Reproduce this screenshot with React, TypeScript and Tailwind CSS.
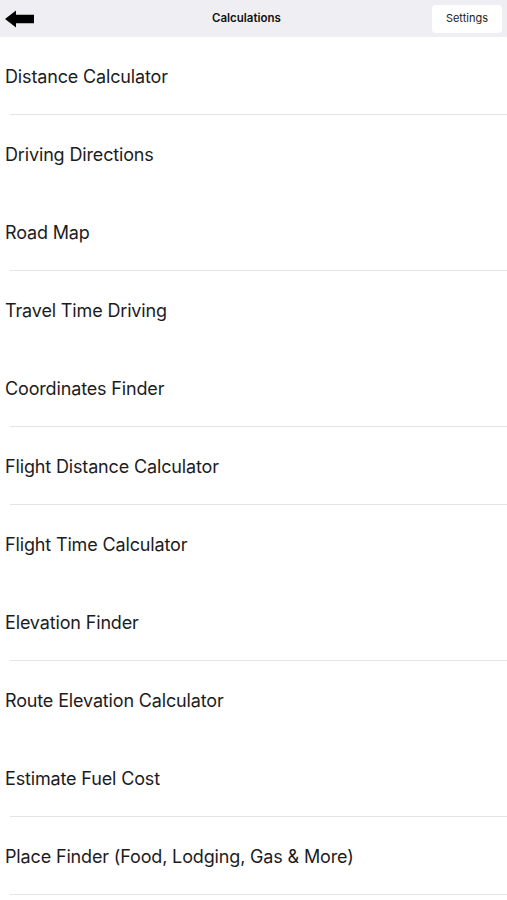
import React from 'react';

const items: { label: string; divider: boolean }[] = [
  { label: 'Distance Calculator', divider: true },
  { label: 'Driving Directions', divider: false },
  { label: 'Road Map', divider: true },
  { label: 'Travel Time Driving', divider: false },
  { label: 'Coordinates Finder', divider: true },
  { label: 'Flight Distance Calculator', divider: true },
  { label: 'Flight Time Calculator', divider: false },
  { label: 'Elevation Finder', divider: true },
  { label: 'Route Elevation Calculator', divider: false },
  { label: 'Estimate Fuel Cost', divider: true },
  { label: 'Place Finder (Food, Lodging, Gas & More)', divider: true },
];

const App: React.FC = () => {
  return (
    <div className="w-[507px] h-[900px] overflow-hidden bg-white" style={{ fontFamily: 'Inter, "Noto Sans", sans-serif' }}>
      {/* header */}
      <div className="h-[37px] bg-[#efeff3] flex items-center justify-between pl-[5px] pr-[5px]">
        <button className="w-[30px] h-[22px] flex items-center" aria-label="Back">
          <svg width="30" height="20" viewBox="0 0 30 20">
            <path d="M0 10 L11 1.5 L11 5.8 L29 5.8 L29 14.2 L11 14.2 L11 18.5 Z" fill="#000" />
          </svg>
        </button>
        <div className="text-[11.5px] font-semibold text-[#111] ml-[26px]">Calculations</div>
        <button className="h-[28px] px-[14px] bg-white rounded-[4px] text-[11px] text-[#222]">Settings</button>
      </div>

      {/* list */}
      <div>
        {items.map(item => (
          <div key={item.label} className="h-[78px] relative flex items-center pl-[5px]">
            <span className="text-[18px] text-[#1c1c1e] tracking-[-0.15px]">{item.label}</span>
            {item.divider && <div className="absolute left-[10px] right-0 bottom-0 h-px bg-[#e4e4e6]" />}
          </div>
        ))}
      </div>
    </div>
  );
};

export default App;
